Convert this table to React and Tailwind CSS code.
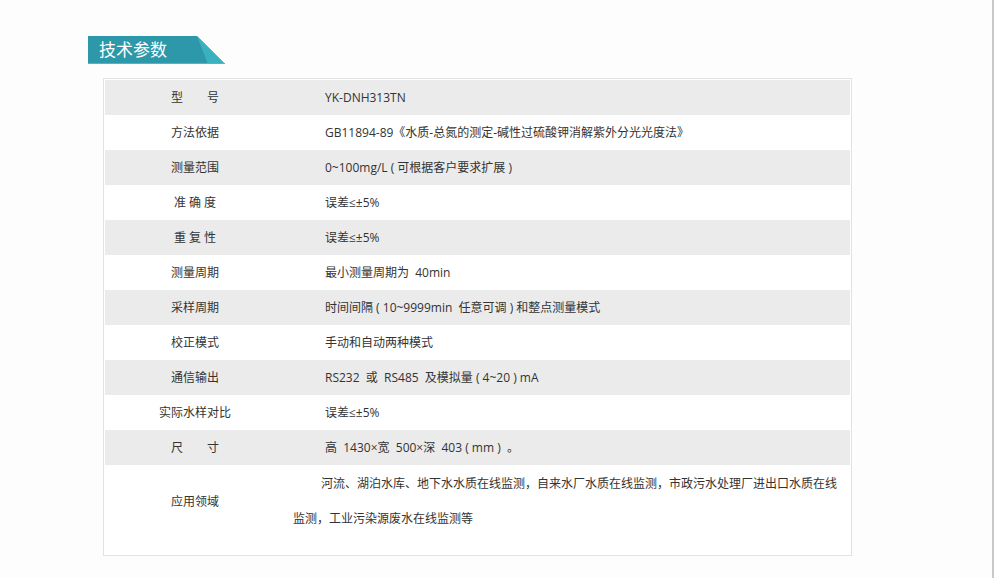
const specs = [
  ["型　　号", "YK-DNH313TN"],
  ["方法依据", "GB11894-89《水质-总氮的测定-碱性过硫酸钾消解紫外分光光度法》"],
  ["测量范围", "0~100mg/L ( 可根据客户要求扩展 )"],
  ["准 确 度", "误差≤±5%"],
  ["重 复 性", "误差≤±5%"],
  ["测量周期", "最小测量周期为  40min"],
  ["采样周期", "时间间隔 ( 10~9999min  任意可调 ) 和整点测量模式"],
  ["校正模式", "手动和自动两种模式"],
  ["通信输出", "RS232  或  RS485  及模拟量 ( 4~20 ) mA"],
  ["实际水样对比", "误差≤±5%"],
  ["尺　　寸", "高  1430×宽  500×深  403 ( mm )  。"],
];

function Banner() {
  return (
    <div className="relative h-[28px] w-[137px]">
      <svg className="absolute inset-0" width="137" height="28" viewBox="0 0 137 28">
        <polygon points="0,0 109,0 137,28 0,28" fill="#2c98a9" />
        <polygon points="109,0 137,28 120,28" fill="#3bb1bf" />
        <rect x="0" y="27" width="137" height="1" fill="#4fb6c3" />
      </svg>
      <span className="relative block pl-[11px] text-[17px] leading-[28px] text-white">技术参数</span>
    </div>
  );
}

export default function App() {
  return (
    <div
      className="h-[578px] w-[994px] border-r-2 border-[#c9c9c9] bg-[#fdfdfd] pl-[88px] pt-[36px] text-[12px] text-[#333]"
      style={{ fontFamily: '"Open Sans", "Noto Sans CJK SC", sans-serif' }}
    >
      <Banner />
      <div className="ml-[15px] mt-[14px] w-[749px] border border-[#e2e2e2] bg-white p-px">
        {specs.map(([label, value], i) => (
          <div key={label} className={`flex h-[35px] items-center ${i % 2 === 0 ? "bg-[#ebebeb]" : "bg-white"}`}>
            <div className="w-[180px] whitespace-pre text-center">{label}</div>
            <div className="whitespace-pre pl-[40px]">{value}</div>
          </div>
        ))}
        <div className="flex h-[89px] items-start">
          <div className="mt-[19px] w-[180px] text-center leading-[35px]">应用领域</div>
          <p className="w-[558px] pl-[8px] pt-px indent-[28px] leading-[35px]">
            河流、湖泊水库、地下水水质在线监测，自来水厂水质在线监测，市政污水处理厂进出口水质在线监测，工业污染源废水在线监测等
          </p>
        </div>
      </div>
    </div>
  );
}
